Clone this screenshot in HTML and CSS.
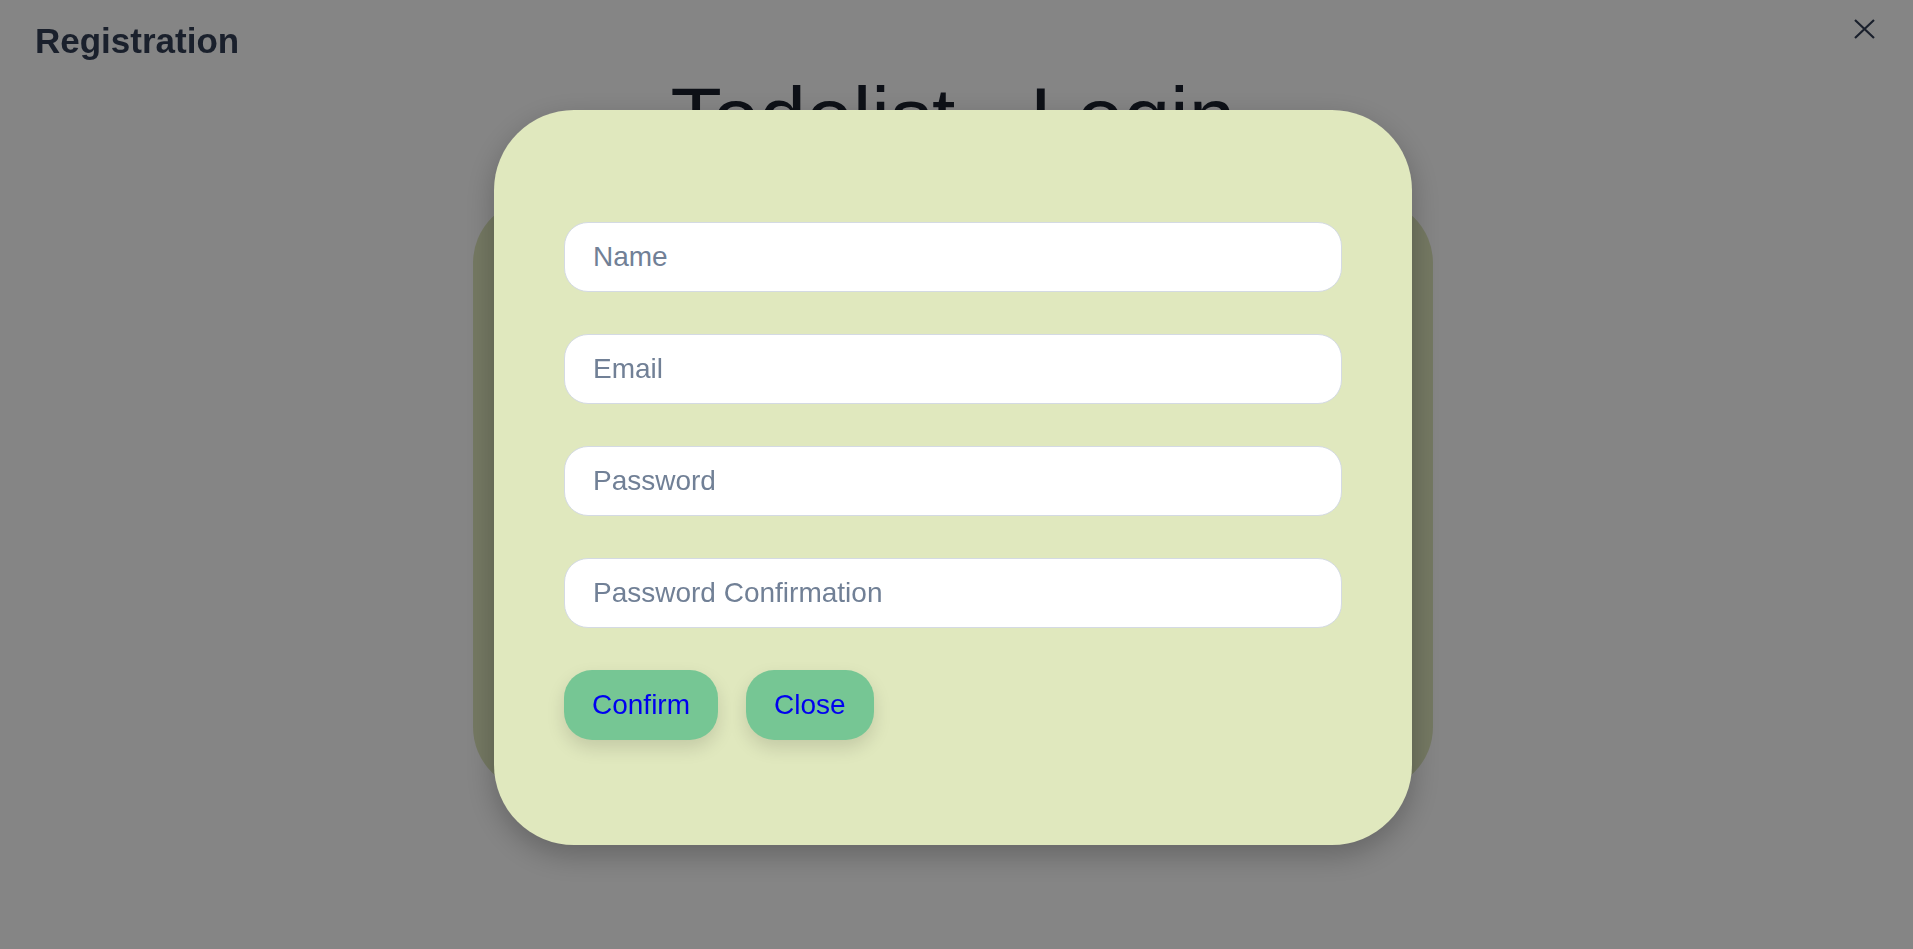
FILE: index.html
```html
<!DOCTYPE html>
<html lang="en">
<head>
<meta charset="utf-8">
<title>Todolist - Login</title>
<link rel="stylesheet" href="styles.css">
</head>
<body>
<div class="page">
  <h1 class="page-title">Todolist - Login</h1>
  <div class="login-card"></div>
</div>

<div class="overlay"></div>

<div class="modal-layer">
  <h2 class="modal-title">Registration</h2>
  <button class="modal-close" aria-label="Close">
    <svg width="21" height="20" viewBox="0 0 21 20"><path d="M1 1 L20 19 M20 1 L1 19" stroke="#1a202c" stroke-width="2.2" fill="none"/></svg>
  </button>
  <div class="modal">
    <form class="reg-form">
      <input class="field" type="text" placeholder="Name">
      <input class="field" type="email" placeholder="Email">
      <input class="field" type="password" placeholder="Password">
      <input class="field" type="password" placeholder="Password Confirmation">
      <div class="actions">
        <button type="button" class="btn">Confirm</button>
        <button type="button" class="btn">Close</button>
      </div>
    </form>
  </div>
</div>
</body>
</html>
```

FILE: styles.css
```css
html, body {
  margin: 0;
  padding: 0;
  height: 100%;
}
body {
  background: #ffffff;
  font-family: "Liberation Sans", Arial, sans-serif;
  color: #1a202c;
  overflow: hidden;
}
.page {
  display: flex;
  flex-direction: column;
  align-items: center;
  padding-right: 7px;
}
.page-title {
  margin: 67px 0 0;
  font-size: 84px;
  line-height: 1.2;
  font-weight: 400;
  color: #1a202c;
}
.login-card {
  margin-top: 31px;
  width: 960px;
  height: 592px;
  border-radius: 64px;
  background: #dfe7bd;
}
.overlay {
  position: fixed;
  inset: 0;
  background: rgba(0, 0, 0, 0.48);
}
.modal-layer {
  position: fixed;
  inset: 0;
  display: flex;
  justify-content: center;
  align-items: flex-start;
  padding: 110px 7px 0 0;
}
.modal-title {
  position: absolute;
  left: 35px;
  top: 20px;
  margin: 0;
  font-size: 35px;
  line-height: 1.2;
  font-weight: 700;
  color: #1a202c;
}
.modal-close {
  position: absolute;
  left: 1854px;
  top: 19px;
  width: 21px;
  height: 20px;
  padding: 0;
  border: 0;
  background: none;
  display: block;
}
.modal-close svg {
  display: block;
}
.modal {
  box-sizing: border-box;
  width: 918px;
  height: 735px;
  padding: 112px 70px 0;
  border-radius: 80px;
  background: #e0e8be;
  box-shadow: 0 10px 30px rgba(0, 0, 0, 0.25);
}
.reg-form {
  display: flex;
  flex-direction: column;
  gap: 42px;
}
.field {
  box-sizing: border-box;
  height: 70px;
  width: 100%;
  padding: 0 28px;
  border: 1px solid #d4dae3;
  border-radius: 24px;
  background: #ffffff;
  font-family: "Liberation Sans", Arial, sans-serif;
  font-size: 28px;
  color: #1a202c;
  outline: none;
}
.field::placeholder {
  color: #718096;
  opacity: 1;
}
.actions {
  display: flex;
  gap: 28px;
}
.btn {
  height: 70px;
  padding: 0 28px;
  border: 0;
  border-radius: 28px;
  background: #76c694;
  color: #0000f0;
  font-family: "Liberation Sans", Arial, sans-serif;
  font-size: 28px;
  box-shadow: 0 8px 18px rgba(0, 0, 0, 0.13);
}
```
